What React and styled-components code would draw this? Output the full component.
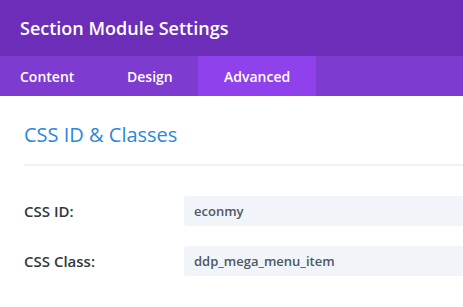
import React from "react";
import styled, { createGlobalStyle } from "styled-components";

const Global = createGlobalStyle`
  html, body { margin: 0; padding: 0; background: #fff; }
  body { font-family: "Open Sans", "Noto Sans", sans-serif; }
`;

const Panel = styled.div`
  width: 463px;
  height: 307px;
  overflow: hidden;
  background: #fff;
`;

const Header = styled.div`
  height: 56px;
  background: #6c2eb9;
  display: flex;
  align-items: center;
  padding-left: 20px;
  color: #fff;
  font-size: 18px;
  font-weight: 600;
`;

const Tabs = styled.div`
  height: 40px;
  background: #7e3bd0;
  display: flex;
`;

const Tab = styled.div`
  display: flex;
  align-items: center;
  box-sizing: border-box;
  width: ${(p) => p.$w}px;
  padding-left: ${(p) => p.$pl}px;
  background: ${(p) => (p.$active ? "#8f42ec" : "transparent")};
  color: #fff;
  font-size: 14px;
  font-weight: 600;
`;

const Body = styled.div`
  padding: 25px 0 0 24px;
`;

const SectionTitle = styled.div`
  color: #2b87da;
  font-size: 20px;
  font-weight: 400;
  line-height: 28px;
  padding-bottom: 15px;
  border-bottom: 2px solid #eef0f3;
`;

const Fields = styled.div`
  display: flex;
  flex-direction: column;
  gap: 20px;
  padding-top: 30px;
`;

const Row = styled.div`
  display: flex;
  align-items: center;
`;

const Label = styled.div`
  width: 160px;
  color: #32373c;
  font-size: 15px;
  font-weight: 600;
`;

const Input = styled.div`
  flex: 1;
  height: 30px;
  display: flex;
  align-items: center;
  padding-left: 10px;
  background: #f1f5f9;
  border-radius: 3px 0 0 3px;
  color: #4c5866;
  font-size: 13px;
  font-weight: 600;
`;

export default function App() {
  return (
    <Panel>
      <Global />
      <Header>Section Module Settings</Header>
      <Tabs>
        <Tab $w={107} $pl={20}>Content</Tab>
        <Tab $w={91} $pl={20}>Design</Tab>
        <Tab $w={118} $pl={26} $active>Advanced</Tab>
      </Tabs>
      <Body>
        <SectionTitle>CSS ID &amp; Classes</SectionTitle>
        <Fields>
          <Row>
            <Label>CSS ID:</Label>
            <Input>econmy</Input>
          </Row>
          <Row>
            <Label>CSS Class:</Label>
            <Input>ddp_mega_menu_item</Input>
          </Row>
        </Fields>
      </Body>
    </Panel>
  );
}
